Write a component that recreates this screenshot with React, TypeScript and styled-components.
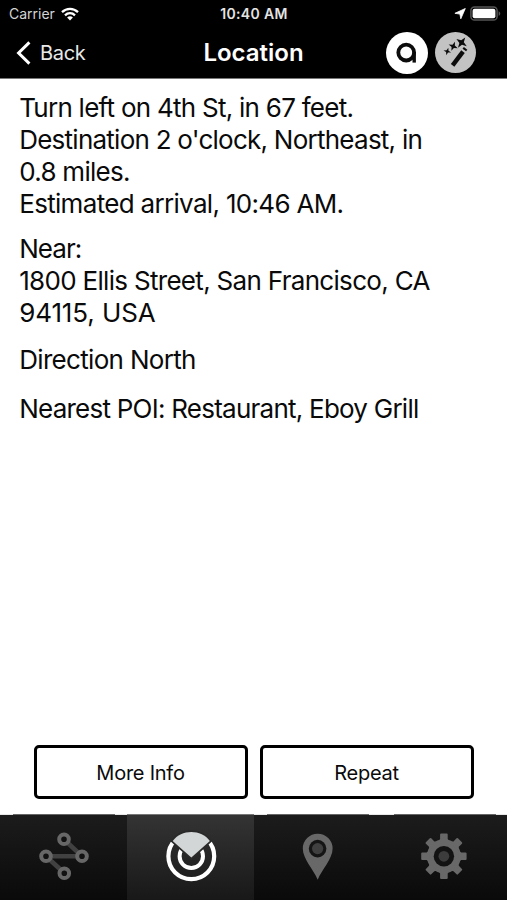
import React from "react";
import styled, { createGlobalStyle } from "styled-components";

const GlobalStyle = createGlobalStyle`
  * { box-sizing: border-box; }
  body { margin: 0; background: #fff; font-family: Inter, "Liberation Sans", sans-serif; }
  svg { display: block; flex: none; }
`;

const Screen = styled.div`
  width: 507px;
  height: 900px;
  display: flex;
  flex-direction: column;
  background: #fff;
  color: #0a0a0a;
  overflow: hidden;
`;

const Header = styled.header`
  height: 79px;
  flex: none;
  background: #000;
  border-bottom: 1px solid #777;
  color: #fff;
`;

const StatusBar = styled.div`
  height: 27px;
  display: grid;
  grid-template-columns: 1fr auto 1fr;
  align-items: center;
  padding: 0 6px 0 9px;
  font-size: 14px;
`;

const Carrier = styled.div`
  display: flex;
  align-items: center;
  gap: 6px;
  color: #d4d4d4;
`;

const Clock = styled.div`
  position: relative;
  font-weight: 600;
  color: #e4e4e4;
  letter-spacing: 0.35px;
  margin-right: 2px;
`;

const StatusIcons = styled.div`
  display: flex;
  justify-content: flex-end;
  align-items: center;
  gap: 4px;
`;

const NavBar = styled.div`
  height: 51px;
  display: grid;
  grid-template-columns: 1fr auto 1fr;
  align-items: center;
  padding: 0 16px;
`;

const BackButton = styled.button`
  display: flex;
  align-items: center;
  gap: 9px;
  border: 0;
  padding: 0;
  background: none;
  color: #e8e8e8;
  font: 400 20px/24px Inter, sans-serif;
  letter-spacing: -0.3px;
`;

const Title = styled.h1`
  margin: 0;
  font-size: 24px;
  font-weight: 600;
  line-height: 30px;
`;

const NavActions = styled.div`
  display: flex;
  justify-content: flex-end;
  align-items: center;
  gap: 7px;
  padding-right: 15px;
`;

const RoundButton = styled.button<{ $fill: string; $size: number }>`
  width: ${(p) => p.$size}px;
  height: ${(p) => p.$size}px;
  padding: 0;
  border: 0;
  border-radius: 50%;
  background: ${(p) => p.$fill};
`;

const Content = styled.main`
  flex: 1;
  padding: 13px 19.2px 0;
  font-size: 26px;
  line-height: 32px;
`;

const Paragraph = styled.section<{ $gap: number }>`
  margin-bottom: ${(p) => p.$gap}px;
`;

const Line = styled.div<{ $spacing: number }>`
  width: max-content;
  white-space: nowrap;
  letter-spacing: ${(p) => p.$spacing}px;
`;

const Actions = styled.div`
  display: grid;
  grid-template-columns: 1fr 1fr;
  gap: 12px;
  padding: 0 33px 15px 34px;
`;

const ActionButton = styled.button`
  height: 54px;
  border: 3.5px solid #000;
  border-radius: 5px;
  padding: 2px 1px 0 0;
  background: #fff;
  color: #0a0a0a;
  font: 400 20px/24px Inter, sans-serif;
  letter-spacing: -0.25px;
`;

const TabBar = styled.nav`
  height: 86px;
  flex: none;
  display: grid;
  grid-template-columns: 127px 127px 127px 126px;
`;

const Tab = styled.button<{ $active?: boolean }>`
  display: flex;
  justify-content: center;
  padding: 16px 0 0;
  border: 0;
  background: ${(p) =>
    p.$active
      ? "linear-gradient(#777, #777) 0 0 / 100% 1px no-repeat, linear-gradient(#343434, #181818)"
      : "linear-gradient(90deg, #e8e8e8 13px, #666 13px, #666 115px, #e8e8e8 115px) 0 0 / 100% 1px no-repeat, linear-gradient(#1c1c1c, #0a0a0a)"};
`;

const WifiIcon = () => (
  <svg width="18" height="14" viewBox="0 0 18 14" fill="none" stroke="#fff" strokeWidth="2.3">
    <path d="M1 5.1C5.6.7 12.4.7 17 5.1" />
    <path d="M4 8.3C6.9 5.5 11.1 5.5 14 8.3" />
    <path d="M9 13.4 6.1 10.4C7.8 8.9 10.2 8.9 11.9 10.4Z" fill="#fff" stroke="none" />
  </svg>
);

const LocationArrow = () => (
  <svg width="12" height="12" viewBox="0 0 12 12">
    <path d="M11.3.5 6.8 10.8 5.9 6.1.9 5.3Z" fill="#fff" stroke="#fff" strokeWidth=".8" strokeLinejoin="round" />
  </svg>
);

const BatteryIcon = () => (
  <svg width="31" height="15" viewBox="0 0 31 15">
    <rect x=".9" y="1" width="26.2" height="13" rx="3.6" fill="#000" stroke="#555" strokeWidth="1.5" />
    <rect x="2.6" y="2.8" width="22.8" height="9.5" rx="2" fill="#fff" />
    <path d="M28.6 5.2c2.2.8 2.2 3.8 0 4.6z" fill="#555" />
  </svg>
);

const BackChevron = () => (
  <svg width="15" height="24" viewBox="0 0 15 24">
    <path d="M13.4 1.4 2.6 12 13.4 22.6" fill="none" stroke="#fff" strokeWidth="3" />
  </svg>
);

const AssistantIcon = () => (
  <svg width="42" height="42" viewBox="0 0 42 42" fill="none" stroke="#0c0c0c">
    <circle cx="20.2" cy="20.6" r="7.9" strokeWidth="3.8" />
    <path d="M28.2 20v10.6" strokeWidth="3.4" />
  </svg>
);

const star = (x: number, y: number, r: number, turn: number) => {
  const points = Array.from({ length: 8 }, (_, i) => {
    const a = ((i * 45 + turn) * Math.PI) / 180;
    const d = i % 2 ? r * 0.36 : r;
    return `${(x + d * Math.cos(a)).toFixed(2)},${(y + d * Math.sin(a)).toFixed(2)}`;
  });
  return <polygon points={points.join(" ")} />;
};

const WandIcon = () => (
  <svg width="41" height="41" viewBox="0 0 41 41" fill="#0c0c0c">
    {star(26.6, 10.6, 6.3, 35)}
    {star(18.2, 14.3, 4.9, 22)}
    {star(12.3, 19.4, 3.9, 15)}
    <path d="M17.6 33.4 28 19.6" stroke="#0c0c0c" strokeWidth="4.4" />
    <path d="m29.3 18 1.3-1.7" stroke="#0c0c0c" strokeWidth="4.4" />
  </svg>
);

const RoutesIcon = () => (
  <svg width="52" height="52" viewBox="38 830 52 52" fill="none">
    <path d="M64 839.3 82 856.3H46L64.3 873" stroke="#414141" strokeWidth="4.6" />
    <g fill="#111" stroke="#676767" strokeWidth="4">
      <circle cx="64" cy="839.3" r="4.8" />
      <circle cx="46" cy="856.3" r="4.8" />
      <circle cx="82" cy="856.3" r="4.8" />
      <circle cx="64.3" cy="873.2" r="4.8" />
    </g>
  </svg>
);

const RadarIcon = () => (
  <svg width="54" height="52" viewBox="164.2 830 54 52" fill="none">
    <circle cx="191.5" cy="856.3" r="22.9" stroke="#fff" strokeWidth="4.2" />
    <circle cx="191.5" cy="856.3" r="11.7" stroke="#fff" strokeWidth="4" />
    <path
      d="M191.5 857.6 172.9 841C181.5 829 201.5 829 210.1 841Z"
      fill="#d3d6d6"
      stroke="#292929"
      strokeWidth="3.4"
      paintOrder="stroke"
    />
  </svg>
);

const PinIcon = () => (
  <svg width="32" height="50" viewBox="302 830 32 50">
    <path d="M317.7 879.8C313.5 869.5 302.8 859 302.8 848.6a14.9 14.9 0 0 1 29.8 0C332.6 859 321.9 869.5 317.7 879.8Z" fill="#686868" />
    <circle cx="317.6" cy="848.6" r="8.8" fill="#151515" />
    <circle cx="317.6" cy="848.6" r="5.6" fill="#404040" />
  </svg>
);

const GearIcon = () => (
  <svg width="48" height="52" viewBox="420 830 48 52">
    <g fill="#686868">
      <circle cx="443.9" cy="856.3" r="17" />
      {[0, 45, 90, 135, 180, 225, 270, 315].map((a) => (
        <path
          key={a}
          d="M438.2 842 440.1 839V834.6Q440.1 833.6 441.1 833.6H446.7Q447.7 833.6 447.7 834.6V839L449.6 842Z"
          transform={`rotate(${a} 443.9 856.3)`}
        />
      ))}
    </g>
    <circle cx="443.9" cy="856.3" r="10.2" fill="#131313" />
    <circle cx="443.9" cy="856.3" r="5.4" fill="#3c3c3c" />
  </svg>
);

const blocks: { gap: number; lines: [string, number][] }[] = [
  {
    gap: 13,
    lines: [
      ["Turn left on 4th St, in 67 feet.", -0.74],
      ["Destination 2 o'clock, Northeast, in", -0.75],
      ["0.8 miles.", -0.72],
      ["Estimated arrival, 10:46 AM.", -0.68],
    ],
  },
  {
    gap: 15,
    lines: [
      ["Near:", -0.95],
      ["1800 Ellis Street, San Francisco, CA", -0.69],
      ["94115, USA", -0.1],
    ],
  },
  { gap: 17, lines: [["Direction North", -0.68]] },
  { gap: 0, lines: [["Nearest POI: Restaurant, Eboy Grill", -0.76]] },
];

export default function App() {
  return (
    <Screen>
      <GlobalStyle />
      <Header>
        <StatusBar>
          <Carrier>
            Carrier
            <WifiIcon />
          </Carrier>
          <Clock>10:40 AM</Clock>
          <StatusIcons>
            <LocationArrow />
            <BatteryIcon />
          </StatusIcons>
        </StatusBar>
        <NavBar>
          <BackButton>
            <BackChevron />
            Back
          </BackButton>
          <Title>Location</Title>
          <NavActions>
            <RoundButton $fill="#fff" $size={42} aria-label="Assistant">
              <AssistantIcon />
            </RoundButton>
            <RoundButton $fill="#c3c3c3" $size={41} aria-label="Magic wand">
              <WandIcon />
            </RoundButton>
          </NavActions>
        </NavBar>
      </Header>
      <Content>
        {blocks.map((block, i) => (
          <Paragraph key={i} $gap={block.gap}>
            {block.lines.map(([text, spacing]) => (
              <Line key={text} $spacing={spacing}>
                {text}
              </Line>
            ))}
          </Paragraph>
        ))}
      </Content>
      <Actions>
        <ActionButton>More Info</ActionButton>
        <ActionButton>Repeat</ActionButton>
      </Actions>
      <TabBar>
        <Tab aria-label="Routes">
          <RoutesIcon />
        </Tab>
        <Tab $active aria-label="Look around">
          <RadarIcon />
        </Tab>
        <Tab aria-label="Places">
          <PinIcon />
        </Tab>
        <Tab aria-label="Settings">
          <GearIcon />
        </Tab>
      </TabBar>
    </Screen>
  );
}
